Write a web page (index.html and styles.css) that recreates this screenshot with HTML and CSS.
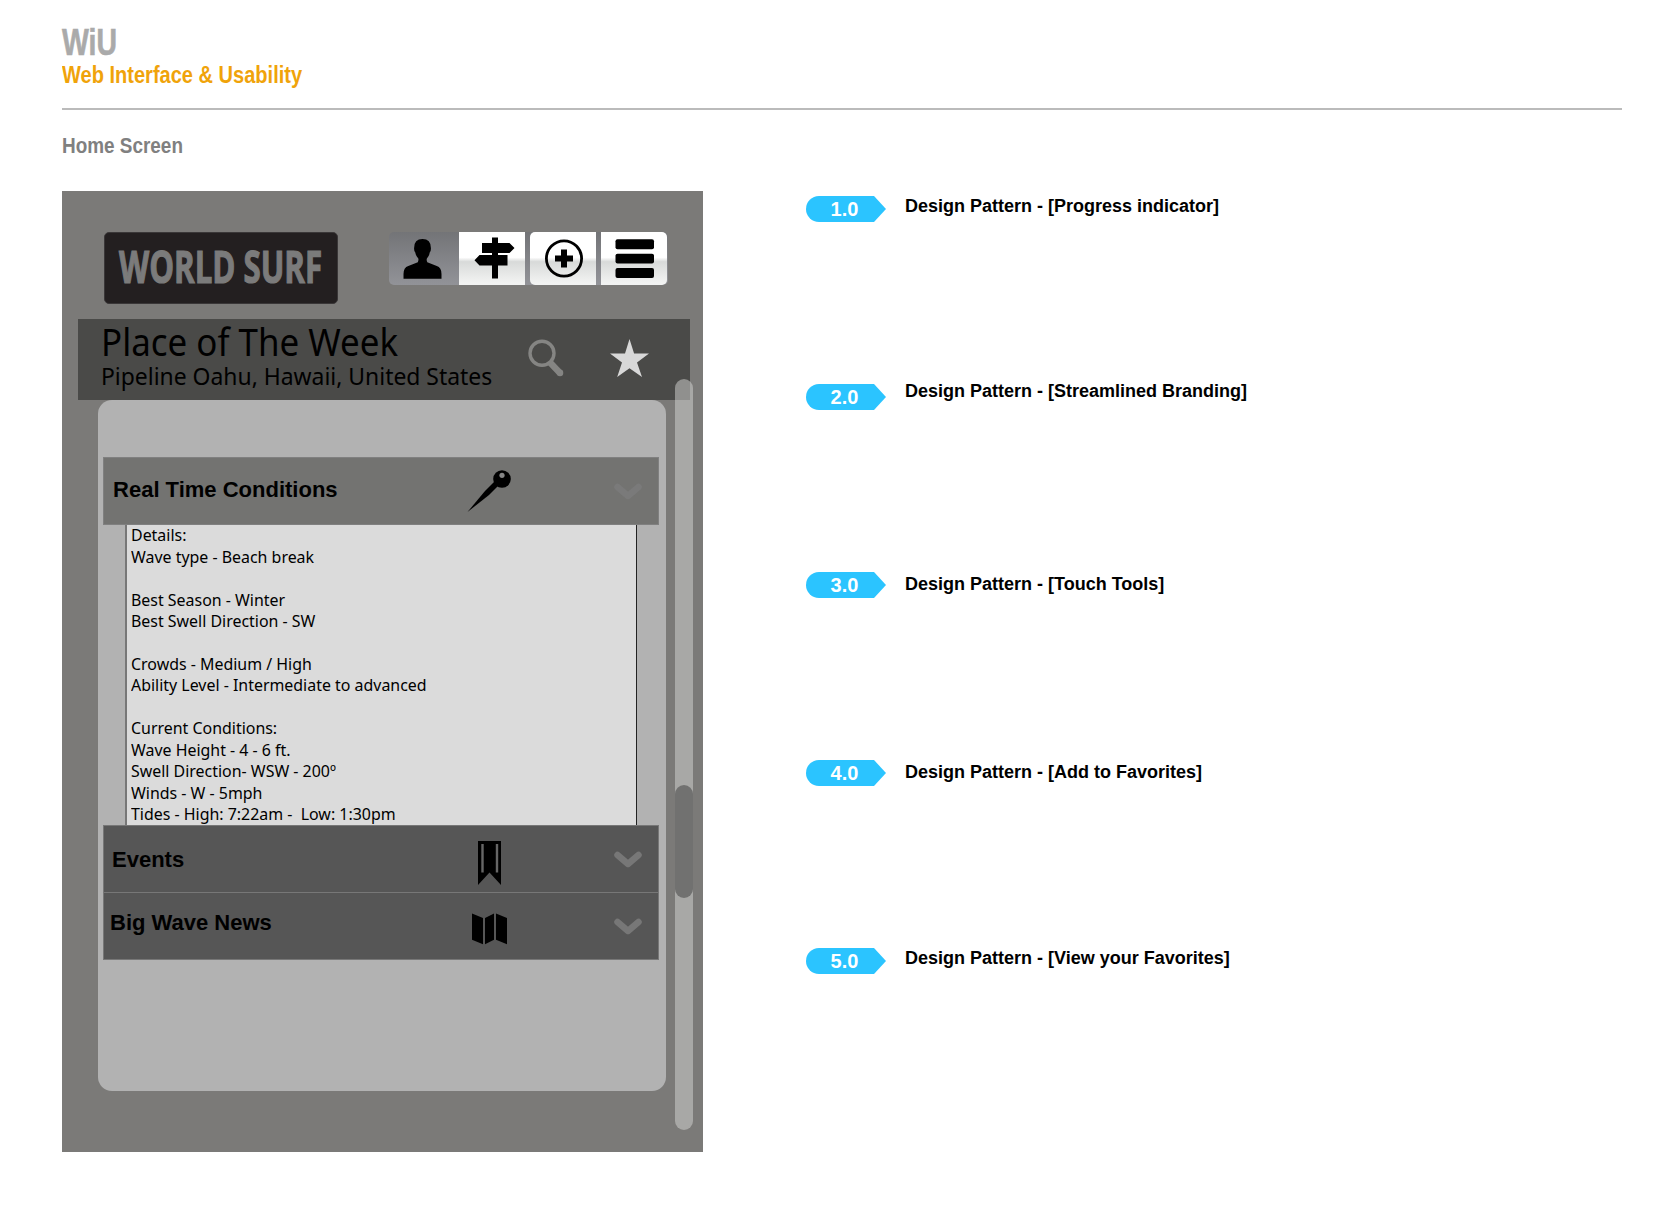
FILE: index.html
```html
<!DOCTYPE html>
<html lang="en">
<head>
<meta charset="utf-8">
<title>WiU - Home Screen</title>
<link rel="stylesheet" href="styles.css">
</head>
<body>
<header class="masthead">
  <h1 class="brand"><span class="fit">WiU</span></h1>
  <p class="tagline"><span class="fit">Web Interface &amp; Usability</span></p>
</header>
<h2 class="screen-name"><span class="fit">Home Screen</span></h2>
<main class="board">
  <section class="phone">
    <div class="topbar">
      <div class="logo"><span class="fit">WORLD SURF</span></div>
      <nav class="tools">
        <a class="tool active"><svg width="70" height="53" viewBox="0 0 70 53"><path d="M14.500 46.700V42Q14.500 35.500 19.300 34L28.800 30.200Q29.800 28 29.300 26.500 26.800 24 26.300 20.500 24.900 19.500 25.100 16 25.100 7 33.500 7 41.900 7 41.900 16 42.100 19.500 40.700 20.500 40.300 24 37.900 26.500 37.300 28 38.300 30.200L47.800 34Q52.500 35.500 52.500 42V46.700z"/></svg></a>
        <a class="tool"><svg width="66" height="53" viewBox="0 0 66 53"><path d="M33 5.500h6V11h11.500l5 5-5 5H39v2h9.500v10.500H39v13h-6v-13H20.500l-5-5.200 5-5.300H33v-2H23V11h10z"/></svg></a>
        <a class="tool round"><svg width="66" height="53" viewBox="0 0 66 53"><circle cx="34" cy="26.500" r="17.600" fill="none" stroke="#000" stroke-width="2.800"/><path d="M31 17.500h6v6h6v6h-6v6h-6v-6h-6v-6h6z"/></svg></a>
        <a class="tool last"><svg width="66" height="53" viewBox="0 0 66 53"><rect x="14.500" y="7.200" width="38.500" height="10" rx="2"/><rect x="14.500" y="21.700" width="38.500" height="9.800" rx="2"/><rect x="14.500" y="36" width="38.500" height="10" rx="2"/></svg></a>
      </nav>
    </div>
    <div class="place">
      <div class="place-text">
        <h3 class="place-title"><span class="fit">Place of The Week</span></h3>
        <p class="place-sub"><span class="fit">Pipeline Oahu, Hawaii, United States</span></p>
      </div>
      <svg class="search" width="40" height="42" viewBox="0 0 40 42"><circle cx="15" cy="15.300" r="12" fill="none" stroke="#858583" stroke-width="3.400"/><path d="M23 24.500l10 10.500" stroke="#858583" stroke-width="6.500"/><path d="M33 34.800l0 .2" stroke="#858583" stroke-width="6.500" stroke-linecap="round"/></svg>
      <svg class="star" width="40" height="40" viewBox="0 0 40 40"><path fill="#d8d8d8" d="M19.500 0l4.600 14.600H39L27 23.500l5 14.500-12.500-8.800L7.200 38l4.800-14.500L0 14.600h15z"/></svg>
    </div>
    <div class="panel">
      <div class="row open">
        <h4 class="row-title"><span class="fit">Real Time Conditions</span></h4>
        <svg class="row-icon" width="60" height="66" viewBox="0 0 60 66"><path d="M7.500 54L25 33l10.500-10.500 4 4L29 37z"/><circle cx="42" cy="21" r="8.800"/><circle cx="42" cy="17.300" r="2.600" fill="#858585"/></svg>
        <svg class="chevron" width="30" height="20" viewBox="0 0 30 20"><path d="M4.500 5L15 14l10.500-9"/></svg>
      </div>
      <div class="details">
        <p><span class="fit">Details:</span></p>
        <p><span class="fit">Wave type - Beach break</span></p>
        <p>&nbsp;</p>
        <p><span class="fit">Best Season - Winter</span></p>
        <p><span class="fit">Best Swell Direction - SW</span></p>
        <p>&nbsp;</p>
        <p><span class="fit">Crowds - Medium / High</span></p>
        <p><span class="fit">Ability Level - Intermediate to advanced</span></p>
        <p>&nbsp;</p>
        <p><span class="fit">Current Conditions:</span></p>
        <p><span class="fit">Wave Height - 4 - 6 ft.</span></p>
        <p><span class="fit">Swell Direction- WSW - 200º</span></p>
        <p><span class="fit">Winds - W - 5mph</span></p>
        <p><span class="fit">Tides - High: 7:22am -&nbsp; Low: 1:30pm</span></p>
      </div>
      <div class="row events">
        <h4 class="row-title"><span class="fit">Events</span></h4>
        <svg class="row-icon" width="60" height="66" viewBox="0 0 60 66"><path d="M18 15h23v44L29.500 46.500 18 59z"/><path d="M22.500 18v28.500M37 18v28.500" stroke="#666" stroke-width="2.400"/></svg>
        <svg class="chevron" width="30" height="20" viewBox="0 0 30 20"><path d="M4.500 5L15 14l10.500-9"/></svg>
      </div>
      <div class="row news">
        <h4 class="row-title"><span class="fit">Big Wave News</span></h4>
        <svg class="row-icon" width="60" height="66" viewBox="0 0 60 66"><path d="M12 20.500l11 4.500V51.200l-11-4.500zM25 25l9-4.500v26.200L25 51.200zM36 20.500l11 4.500V51.200l-11-4.500z"/></svg>
        <svg class="chevron" width="30" height="20" viewBox="0 0 30 20"><path d="M4.500 5L15 14l10.500-9"/></svg>
      </div>
    </div>
    <div class="scrollbar"><div class="thumb"></div></div>
  </section>
  <ol class="patterns">
    <li class="pattern"><span class="badge">1.0</span><span class="label">Design Pattern - [Progress indicator]</span></li>
    <li class="pattern raised"><span class="badge">2.0</span><span class="label">Design Pattern - [Streamlined Branding]</span></li>
    <li class="pattern lowered"><span class="badge">3.0</span><span class="label">Design Pattern - [Touch Tools]</span></li>
    <li class="pattern lowered"><span class="badge">4.0</span><span class="label">Design Pattern - [Add to Favorites]</span></li>
    <li class="pattern"><span class="badge">5.0</span><span class="label">Design Pattern - [View your Favorites]</span></li>
  </ol>
</main>
</body>
</html>
```
FILE: styles.css
```css
* { box-sizing: border-box; }
body, h1, h2, h3, h4, p, ol { margin: 0; padding: 0; }
body {
  width: 1669px;
  height: 1222px;
  padding: 25px 47px 0 62px;
  background: #fff;
  color: #000;
  font-family: "Liberation Sans", Arial, sans-serif;
  overflow: hidden;
}
svg { display: block; flex: none; }

/* condensed text */
.fit { display: inline-block; white-space: nowrap; transform-origin: 0 50%; }
.brand .fit { transform: scaleX(.79); -webkit-text-stroke: .6px #aaa; }
.tagline .fit { transform: scaleX(.86); }
.screen-name .fit { transform: scaleX(.841); }
.logo .fit { transform: scaleX(.694); -webkit-text-stroke: 1.2px #7b7b7b; }
.place-title .fit { transform: scaleX(.934); }
.place-sub .fit { transform: scaleX(.939); }
.row-title .fit { transform: scaleX(.983); }
.details .fit { transform: scaleX(.949); }

.masthead { height: 85px; border-bottom: 2px solid #bbb; }
.brand { font-size: 36px; line-height: 36px; color: #aaa; }
.tagline { font-size: 23.3px; line-height: 28px; font-weight: bold; color: #f0a30a; }
.screen-name { margin-top: 22px; font-size: 22.5px; line-height: 28px; color: #808080; }

.board { display: flex; align-items: flex-start; margin-top: 31px; }
.phone { position: relative; flex: none; width: 640.5px; height: 961px; background: #7b7a78; }

.topbar { display: flex; align-items: flex-start; height: 128px; padding: 41px 0 0 42px; }
.logo {
  width: 234px;
  height: 72px;
  padding-left: 14px;
  border: 1px solid #3a3738;
  border-radius: 5px;
  background: #231f20;
  color: #7b7b7b;
  font: bold 45px/66px "Open Sans", "Noto Sans", sans-serif;
}
.tools {
  display: flex;
  margin: 0 0 0 51px;
  width: 279px;
  height: 53px;
  border-radius: 5px;
  background: linear-gradient(#737477, #929398);
  overflow: hidden;
}
.tool { width: 66px; height: 53px; background: linear-gradient(#fff 48%, #d8dad9 56%, #f2f3f2 96%); }
.tool.active { width: 70px; background: none; }
.tool.round { margin-left: 5px; border-radius: 5px 0 0 5px; }
.tool.last { margin-left: 5px; border-radius: 0 5px 5px 0; }

.place {
  display: flex;
  width: 612px;
  height: 81px;
  margin-left: 16px;
  padding-left: 23px;
  background: #4a4a48;
  font-family: "Noto Sans", "Open Sans", sans-serif;
}
.place-text { width: 426px; padding-top: 4px; }
.place-title { font-size: 37.4px; line-height: 38px; font-weight: 400; }
.place-sub { font-size: 24.4px; line-height: 30px; }
.search { margin-top: 19px; }
.star { margin: 20px 0 0 43px; }

.panel { width: 568px; height: 691px; margin-left: 36px; padding: 57px 7px 0 5px; border-radius: 14px; background: #b2b2b2; }
.row { display: flex; height: 68px; border: 1px solid #777; background: #565656; }
.row-title { width: 356px; padding-left: 8px; font-size: 22.4px; line-height: 26px; }
.chevron { margin: 24px 0 0 93px; fill: none; stroke: #777; stroke-width: 6.5; stroke-linecap: round; stroke-linejoin: round; }
.open { background: #737371; border-color: #808080; }
.open .row-title { padding: 19px 0 0 9px; }
.open .chevron { stroke: #7a7a7a; }
.events { height: 67px; border-bottom: 0; }
.events .row-title { padding-top: 21px; }
.news .row-title { padding: 17px 0 0 6px; }

.details {
  display: flow-root;
  height: 300px;
  margin: 0 22px 0 22px;
  padding: 0 0 0 4px;
  border-left: 2px solid #777;
  border-right: 1px solid #222;
  background: #dbdbdb;
  font: 16.8px/21.45px "Noto Sans", "Open Sans", sans-serif;
}
.details p { height: 21.45px; }
.details p:first-child { margin-top: -.7px; }

.scrollbar { position: absolute; left: 613px; top: 188px; width: 18px; height: 751px; padding-top: 406px; border-radius: 9px; background: rgba(213, 213, 211, .5); }
.thumb { height: 113px; border-radius: 9px; background: #717170; }

.patterns { list-style: none; margin: 5px 0 0 103.5px; }
.pattern { display: flex; height: 188px; }
.badge {
  width: 80px;
  height: 26px;
  padding-right: 3px;
  border-radius: 13px 0 0 13px;
  background: #2bc4ff;
  clip-path: polygon(0 0, 85% 0, 100% 50%, 85% 100%, 0 100%);
  color: #fff;
  font: bold 20px/27px "Liberation Sans", Arial, sans-serif;
  text-align: center;
}
.label { margin-left: 19px; font-weight: bold; font-size: 18px; line-height: 20px; }
.raised .label { margin-top: -3px; }
.lowered .label { margin-top: 2px; }
```
